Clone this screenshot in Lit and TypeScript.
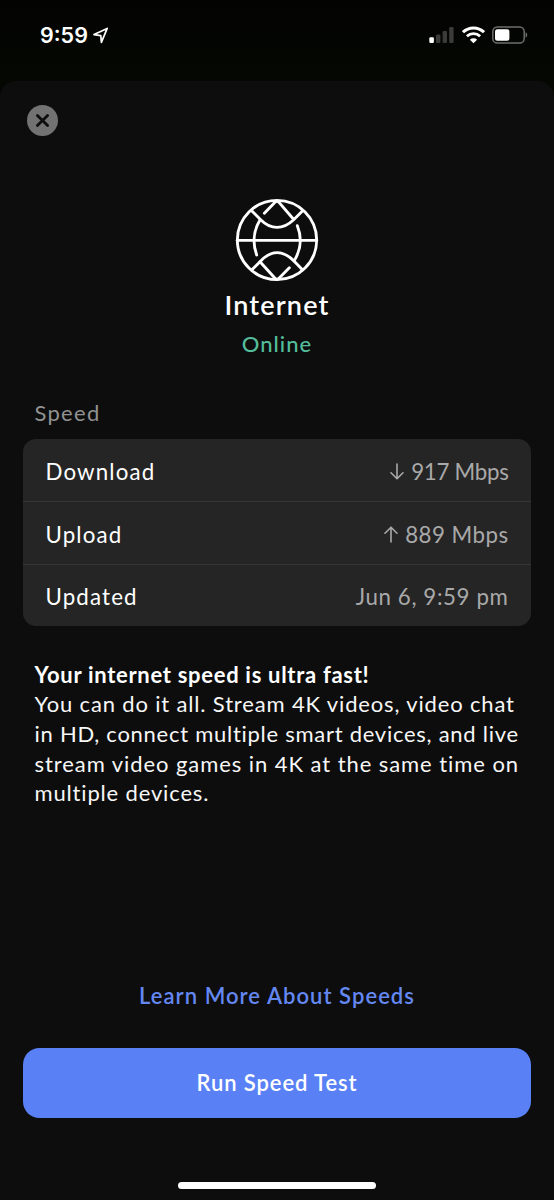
import { LitElement, html, css, svg } from "lit";
import { customElement, property } from "lit/decorators.js";

const arrow = (up: boolean) => html`<svg class="arrow" viewBox="0 0 14 17" width="14" height="17" fill="none" stroke="currentColor" stroke-width="1.6" stroke-linecap="round" stroke-linejoin="round">
  ${up ? svg`<path d="M7 16V1.2M1 7.2 7 1.2 13 7.2"/>` : svg`<path d="M7 1v14.8M1 9.8 7 15.8 13 9.8"/>`}
</svg>`;

@customElement("status-bar")
class StatusBar extends LitElement {
  static styles = css`
    :host { display: flex; justify-content: space-between; height: 81px; box-sizing: border-box; padding: 23px 26px 0 40px; color: #fff; }
    .left, .right { display: flex; align-items: center; height: 24px; }
    .time { font: 600 21.5px/24px Inter, sans-serif; letter-spacing: 0; }
    .loc { margin-left: 5px; }
    .wifi { margin-left: 7px; }
    .battery { margin-left: 7px; }
  `;
  render() {
    return html`
      <div class="left">
        <span class="time">9:59</span>
        <svg class="loc" width="16" height="17" viewBox="0 0 16 17" fill="none" stroke="#fff" stroke-width="1.7" stroke-linejoin="round"><path d="M14.2 1.4 1 7.6l6.8 1 .6 6.8z"/></svg>
      </div>
      <div class="right">
        <svg width="26" height="18" viewBox="0 0 26 18">
          <rect x="0.3" y="11.3" width="4.6" height="5.7" rx="1.2" fill="#fff"/>
          <g fill="#3b3c39"><rect x="7" y="8.5" width="4.4" height="8.5" rx="1.2"/><rect x="13.6" y="5" width="4.4" height="12" rx="1.2"/><rect x="20.2" y="1" width="4.4" height="16" rx="1.2"/></g>
        </svg>
        <svg class="wifi" width="23" height="18" viewBox="0 0 23 18" fill="none" stroke="#fff">
          <path d="M1 6.2a15.2 15.2 0 0 1 21 0" stroke-width="3"/>
          <path d="M4.9 10.3a9.5 9.5 0 0 1 13.2 0" stroke-width="2.8"/>
          <path d="M11.5 17.3 7.9 13.7a5.2 5.2 0 0 1 7.2 0z" fill="#fff" stroke="none"/>
        </svg>
        <svg class="battery" width="36" height="18" viewBox="0 0 36 18">
          <rect x="0.8" y="1" width="31.4" height="16" rx="4.6" fill="none" stroke="#6d6e6b" stroke-width="1.5"/>
          <rect x="3" y="3.2" width="14.4" height="11.6" rx="2.2" fill="#fff"/>
          <path d="M33.6 6.3c2.2.7 2.2 4.7 0 5.4z" fill="#6d6e6b"/>
        </svg>
      </div>`;
  }
}

@customElement("stat-row")
class StatRow extends LitElement {
  @property() label = "";
  @property() value = "";
  @property() direction = "";
  static styles = css`
    :host { display: flex; justify-content: space-between; align-items: center; height: 62.4px; box-sizing: border-box; padding: 3px 22.5px 0 22.5px; }
    .label { color: #fff; font-size: 22.3px; letter-spacing: 1.15px; }
    .value { display: flex; align-items: center; gap: 8px; color: #a9a9a9; font-size: 22.3px; letter-spacing: 0.6px; }
    .down { letter-spacing: -0.3px; }
    .up { letter-spacing: 0.45px; }
    .arrow { margin-right: -0.5px; }
  `;
  render() {
    return html`<span class="label">${this.label}</span>
      <span class="value">${this.direction ? arrow(this.direction === "up") : ""}<span class=${this.direction}>${this.value}</span></span>`;
  }
}

@customElement("app-root")
class AppRoot extends LitElement {
  static styles = css`
    :host { display: block; width: 554px; height: 1200px; overflow: hidden; background: linear-gradient(#030402, #050702 81px, #040502 120px); font: 400 22px/30px Lato, sans-serif; color: #fff; }
    .sheet { display: flex; flex-direction: column; height: 1119px; box-sizing: border-box; padding: 24px 23px 11px; background: #0d0d0d; border-radius: 16px 16px 0 0; }
    .close { display: block; margin-left: 4px; width: 31px; height: 31px; flex: none; padding: 0; border: 0; background: none; }
    .close svg { display: block; }
    .hero { display: flex; flex-direction: column; align-items: center; margin-top: 62px; }
    .title { margin: 5px 0 0; font-size: 27px; line-height: 36px; font-weight: 600; letter-spacing: 1.15px; }
    .state { margin-top: 6px; color: #54bd9c; font-weight: 500; letter-spacing: 1px; }
    .section { margin: 39px 0 0 11.5px; font-size: 22px; font-weight: 400; line-height: 30px; color: #929292; letter-spacing: 1.3px; }
    .card { margin-top: 11px; border-radius: 13px; background: #252525; overflow: hidden; height: 187px; flex: none; }
    .card stat-row + stat-row { border-top: 1px solid #363636; }
    .copy { margin: 33.5px 0 0 11.5px; line-height: 29.7px; white-space: nowrap; }
    .copy strong { display: block; font-weight: 700; letter-spacing: 0.7px; }
    .copy p { margin: 0; color: #f7f7f7; letter-spacing: 0.84px; }
    .snug { letter-spacing: 0.73px; }
    .loose { letter-spacing: 0.93px; }
    .actions { margin-top: auto; display: flex; flex-direction: column; align-items: center; }
    .link { color: #6488f2; font-weight: 600; letter-spacing: 1.05px; text-decoration: none; }
    .primary { margin-top: 37px; width: 508px; height: 69.5px; border: 0; border-radius: 16.5px; background: #5981f5; color: #fff; font: 600 22px/30px Lato, sans-serif; letter-spacing: 0.9px; padding: 0; }
    .home { margin-top: 64px; width: 198px; height: 7.5px; border-radius: 4px; background: #fff; }
  `;
  render() {
    return html`
      <status-bar></status-bar>
      <main class="sheet">
        <button class="close" aria-label="Close">
          <svg width="31" height="31" viewBox="0 0 31 31"><circle cx="15.5" cy="15.5" r="15.5" fill="#727272"/><path d="M10.4 10.4 20.6 20.6M20.6 10.4 10.4 20.6" stroke="#0d0d0d" stroke-width="2.8" stroke-linecap="round"/></svg>
        </button>
        <div class="hero">
          <svg width="84" height="84" viewBox="45 24 252 252" fill="none" stroke="#fff" stroke-width="8.6" stroke-linecap="round" stroke-linejoin="round">
            <circle cx="171" cy="150" r="119"/>
            <path d="M52 151H290"/>
            <path d="M95 62 122 89Q145 112 171 112T221 89L248 62"/>
            <path d="M133 70 165 37Q171 31 177 37L220 87"/>
            <path d="M95 240 120 215Q145 188 171 188T222 213L248 240"/>
            <path d="M120 215 165 265Q171 271 177 265L208 233"/>
            <path d="M120 90Q90 140 110 195"/>
            <path d="M232 107Q254 162 222 213"/>
          </svg>
          <h1 class="title">Internet</h1>
          <div class="state">Online</div>
        </div>
        <h2 class="section">Speed</h2>
        <div class="card">
          <stat-row label="Download" value="917 Mbps" direction="down"></stat-row>
          <stat-row label="Upload" value="889 Mbps" direction="up"></stat-row>
          <stat-row label="Updated" value="Jun 6, 9:59 pm"></stat-row>
        </div>
        <div class="copy">
          <strong>Your internet speed is ultra fast!</strong>
          <p>You can do it all. Stream 4K videos, video chat<br><span class="snug">in HD, connect multiple smart devices, and live</span><br><span class="loose">stream video games in 4K at the same time on</span><br>multiple devices.</p>
        </div>
        <div class="actions">
          <a class="link">Learn More About Speeds</a>
          <button class="primary">Run Speed Test</button>
          <div class="home"></div>
        </div>
      </main>`;
  }
}
